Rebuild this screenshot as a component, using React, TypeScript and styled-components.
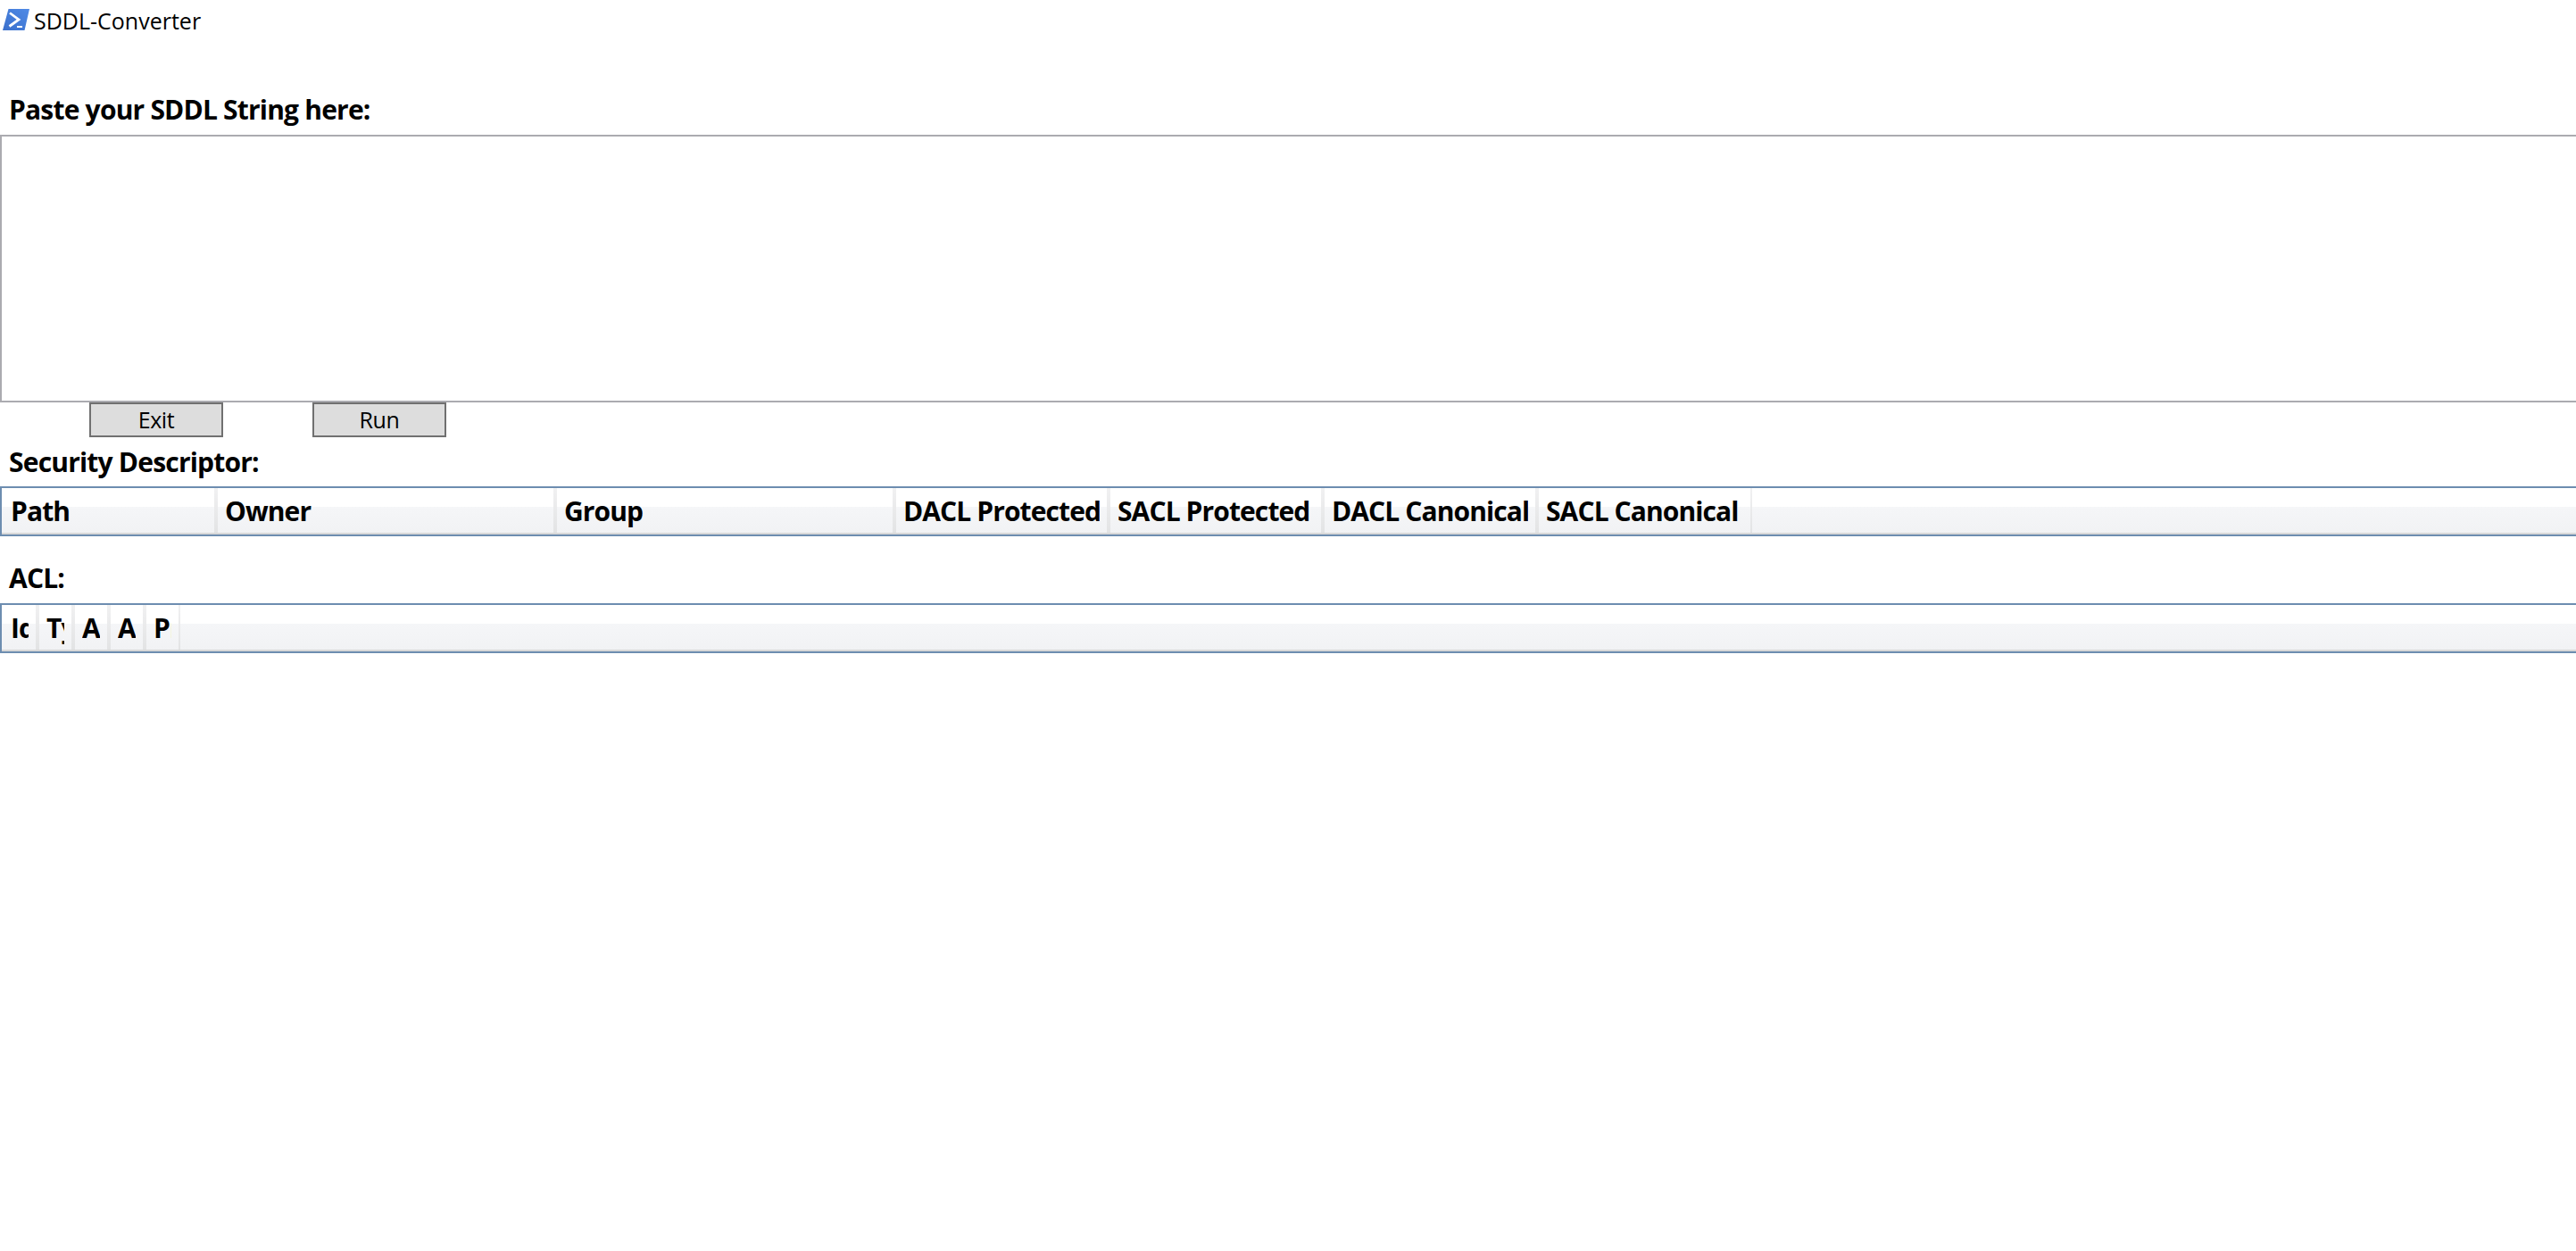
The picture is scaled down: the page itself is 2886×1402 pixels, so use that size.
import styled, { createGlobalStyle } from 'styled-components'

const GlobalStyle = createGlobalStyle`
  html, body {
    margin: 0;
    background: #fff;
    overflow: hidden;
  }
`

const Window = styled.div`
  width: 2886px;
  height: 1402px;
  overflow: hidden;
  font-family: "Open Sans", "Noto Sans", sans-serif;
  color: #000;
`

const TitleBar = styled.div`
  display: flex;
  align-items: center;
  gap: 4px;
  height: 44px;
  padding: 0 0 2px 2px;
  font-size: 25px;
`

const TitleText = styled.span`
  padding-top: 2px;
`

const Label = styled.div<{ $top: number; $bottom: number }>`
  margin: ${p => p.$top}px 0 ${p => p.$bottom}px;
  padding-left: 10px;
  height: 40px;
  line-height: 40px;
  font-size: 30px;
  font-weight: 700;
  letter-spacing: -0.8px;
`

const Input = styled.textarea`
  display: block;
  box-sizing: border-box;
  width: calc(100% + 4px);
  height: 300px;
  margin: 0;
  border: 2px solid #ababb0;
  border-radius: 0;
  outline: none;
  resize: none;
  background: #fff;
`

const ButtonRow = styled.div`
  display: flex;
  gap: 100px;
  padding-left: 100px;
`

const Button = styled.button`
  box-sizing: border-box;
  width: 150px;
  height: 39px;
  padding: 0 0 2px;
  border: 2px solid #707070;
  border-radius: 0;
  background: #ddd;
  font-family: inherit;
  font-size: 25px;
  letter-spacing: -0.4px;
  color: #000;
`

const Table = styled.div`
  box-sizing: border-box;
  display: flex;
  width: calc(100% + 4px);
  height: 56px;
  border: 2px solid #6d8db0;
  background: linear-gradient(#fff 0 40%, #f5f6f8 40%, #f1f2f4 100%);
  box-shadow: inset 0 -2px 0 #d8d8d8;
`

const Column = styled.div<{ $width: number; $grip: number }>`
  box-sizing: border-box;
  flex: none;
  width: ${p => p.$width}px;
  height: 50px;
  padding: 0 8px;
  border-right: ${p => p.$grip}px solid;
  border-image: linear-gradient(#f1f1f2, #e2e3e4) 1;

  &:first-child {
    padding-left: 10px;
  }
`

const ColumnName = styled.div`
  overflow: hidden;
  white-space: nowrap;
  font-size: 30px;
  font-weight: 700;
  letter-spacing: -0.9px;
  line-height: 52px;
`

const securityColumns: [string, number, number][] = [
  ['Path', 242, 4],
  ['Owner', 380, 4],
  ['Group', 380, 4],
  ['DACL Protected', 240, 4],
  ['SACL Protected', 240, 4],
  ['DACL Canonical', 240, 4],
  ['SACL Canonical', 239, 2],
]

const aclColumns: [string, number, number][] = [
  ['IdentityReference', 42, 4],
  ['Type', 40, 4],
  ['AccessControlType', 40, 4],
  ['AccessMask', 40, 4],
  ['PropagationFlags', 38, 2],
]

function ShellIcon() {
  return (
    <svg width="32" height="24" viewBox="0 0 32 24">
      <defs>
        <linearGradient id="shell" x1="0" y1="1" x2="1" y2="0">
          <stop offset="0" stopColor="#3a6fcb" />
          <stop offset="1" stopColor="#4f8ae6" />
        </linearGradient>
      </defs>
      <path d="M7.5 0 H31 L25.5 24 H1 Z" fill="url(#shell)" />
      <path d="M9 4.5 L19 12 L8.5 19.5" fill="none" stroke="#fff" strokeWidth="2.8" />
      <path d="M17 20 H23" stroke="#fff" strokeWidth="2" />
    </svg>
  )
}

function Header({ columns }: { columns: [string, number, number][] }) {
  return (
    <Table>
      {columns.map(([name, width, grip]) => (
        <Column key={name} $width={width} $grip={grip}>
          <ColumnName>{name}</ColumnName>
        </Column>
      ))}
    </Table>
  )
}

export default function App() {
  return (
    <Window>
      <GlobalStyle />
      <TitleBar>
        <ShellIcon />
        <TitleText>SDDL-Converter</TitleText>
      </TitleBar>
      <Label $top={57} $bottom={8}>Paste your SDDL String here:</Label>
      <Input />
      <ButtonRow>
        <Button>Exit</Button>
        <Button>Run</Button>
      </ButtonRow>
      <Label $top={8} $bottom={7}>Security Descriptor:</Label>
      <Header columns={securityColumns} />
      <Label $top={27} $bottom={8}>ACL:</Label>
      <Header columns={aclColumns} />
    </Window>
  )
}
